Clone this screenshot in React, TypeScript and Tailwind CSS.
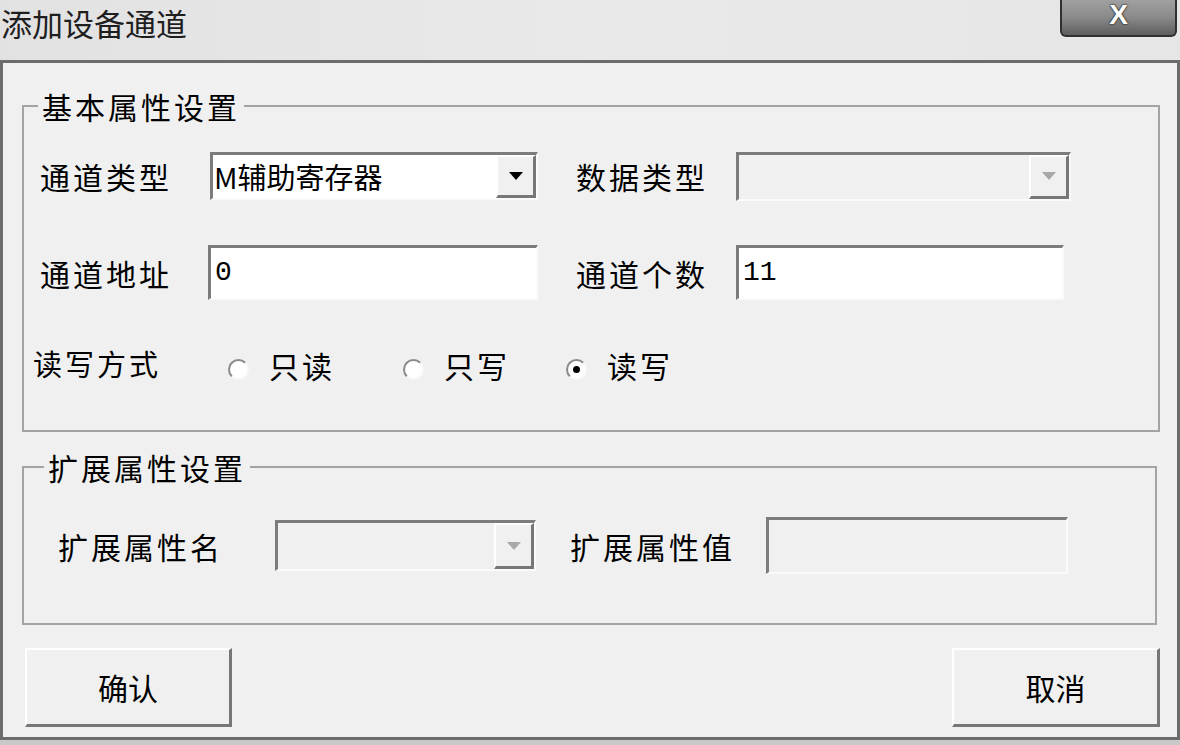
import React from "react";

const font = { fontFamily: '"Noto Sans CJK SC", "Noto Sans", sans-serif' };

const sunken =
  "border-t-[3px] border-l-[3px] border-t-[#7c7c7c] border-l-[#7c7c7c] border-b-2 border-r-2 border-b-[#fafafa] border-r-[#fafafa]";
const raised =
  "border-t-2 border-l-2 border-t-white border-l-white border-b-[3px] border-r-[3px] border-b-[#777777] border-r-[#777777]";

function Arrow({ disabled }: { disabled?: boolean }) {
  return (
    <svg width="16" height="10" viewBox="0 0 16 10">
      <polygon points="1,1 15,1 8,9" fill={disabled ? "#a8a8a8" : "#000000"} />
    </svg>
  );
}

function Combo({ width, height, value, disabled }: { width: string; height: string; value?: string; disabled?: boolean }) {
  return (
    <div className={`${width} ${height} ${sunken} ${disabled ? "bg-[#f0f0f0]" : "bg-white"} flex items-stretch`}>
      <div className="flex-1 flex items-center pl-[1px] text-[29px] leading-none text-black overflow-hidden whitespace-nowrap">
        {value}
      </div>
      <div className={`w-[40px] ${raised} bg-[#f0f0f0] flex items-center justify-center`}>
        <Arrow disabled={disabled} />
      </div>
    </div>
  );
}

function Field({ width, height, value, disabled }: { width: string; height: string; value?: string; disabled?: boolean }) {
  return (
    <div className={`${width} ${height} ${sunken} ${disabled ? "bg-[#f0f0f0]" : "bg-white"} flex items-center pl-[4px] text-[28px] leading-none text-black`}>
      <span style={{ fontFamily: '"Liberation Mono", monospace' }}>{value}</span>
    </div>
  );
}

function Radio({ checked, label, width }: { checked?: boolean; label: string; width: string }) {
  return (
    <div className={`${width} flex items-center`}>
      <div className="w-[21px] h-[21px] rounded-full border-2 border-t-[#8a8a8a] border-l-[#8a8a8a] border-b-[#f8f8f8] border-r-[#f8f8f8] bg-white flex items-center justify-center mt-[8px]">
        {checked && <div className="w-[7px] h-[7px] rounded-full bg-black" />}
      </div>
      <span className="ml-[20px] text-[30px] tracking-[3px] leading-none text-black">{label}</span>
    </div>
  );
}

export default function App() {
  return (
    <div className="w-[1180px] h-[745px] overflow-hidden bg-[#c9c9c9] text-black" style={font}>
      {/* title bar */}
      <div className="h-[60px] flex items-start bg-gradient-to-r from-[#e2e2e2] via-[#e9e9e9] to-[#e6e6e6]">
        <div className="pl-[1px] pt-[2px] text-[31px] leading-[42px] text-[#1e1e1e]">添加设备通道</div>
        <div className="ml-auto mr-[3px] w-[117px] h-[37px] rounded-b-[6px] border-2 border-t-0 border-[#303030] bg-gradient-to-b from-[#a0a0a0] via-[#8a8a8a] to-[#5e5e5e] flex items-start justify-center pt-[1px]">
          <span
            className="text-[28px] font-bold leading-[28px] text-white [text-shadow:0_0_2px_#222,0_0_2px_#222]"
            style={{ fontFamily: '"Liberation Sans", sans-serif' }}
          >
            X
          </span>
        </div>
      </div>

      {/* dialog body */}
      <div className="h-[680px] border-[3px] border-[#6c6c6c] bg-[#f0f0f0] flex flex-col">
        <fieldset className="mt-[26px] ml-[19px] w-[1138px] border-2 border-[#a4a4a4] pl-[16px] pb-[45px] pt-[29px]">
          <legend className="-ml-[2px] px-[4px] text-[30px] tracking-[3px] leading-[34px]">基本属性设置</legend>
          <div className="flex items-center h-[48px]">
            <div className="w-[170px] text-[30px] tracking-[3px] leading-none">通道类型</div>
            <Combo width="w-[328px]" height="h-[48px]" value="M辅助寄存器" />
            <div className="ml-[38px] w-[160px] text-[30px] tracking-[3px] leading-none">数据类型</div>
            <Combo width="w-[335px]" height="h-[49px]" disabled />
          </div>
          <div className="flex items-center h-[55px] mt-[45px]">
            <div className="w-[168px] text-[30px] tracking-[3px] leading-none">通道地址</div>
            <Field width="w-[330px]" height="h-[55px]" value="0" />
            <div className="ml-[38px] w-[160px] text-[30px] tracking-[3px] leading-none">通道个数</div>
            <Field width="w-[328px]" height="h-[55px]" value="11" />
          </div>
          <div className="flex items-center h-[40px] mt-[45px] -ml-[7px]">
            <div className="w-[195px] text-[29px] tracking-[3px] leading-none -mt-[4px]">读写方式</div>
            <Radio label="只读" width="w-[175px]" />
            <Radio label="只写" width="w-[163px]" />
            <Radio label="读写" width="w-[150px]" checked />
          </div>
        </fieldset>

        <fieldset className="mt-[18px] ml-[19px] w-[1135px] border-2 border-[#a4a4a4] pl-[34px] pt-[33px] pb-[49px]">
          <legend className="-ml-[14px] px-[4px] text-[30px] tracking-[3px] leading-[34px]">扩展属性设置</legend>
          <div className="flex items-center h-[57px]">
            <div className="w-[217px] text-[30px] tracking-[3px] leading-none">扩展属性名</div>
            <Combo width="w-[261px]" height="h-[51px]" disabled />
            <div className="ml-[34px] w-[196px] text-[30px] tracking-[3px] leading-none">扩展属性值</div>
            <Field width="w-[302px]" height="h-[57px]" disabled />
          </div>
        </fieldset>

        <div className="mt-[23px] pl-[22px] pr-[17px] flex justify-between">
          <button className={`w-[207px] h-[79px] ${raised} bg-[#f0f0f0] flex items-center justify-center text-[30px] leading-none`}>
            确认
          </button>
          <button className={`w-[208px] h-[79px] ${raised} bg-[#f0f0f0] flex items-center justify-center text-[30px] leading-none`}>
            取消
          </button>
        </div>
      </div>
    </div>
  );
}
